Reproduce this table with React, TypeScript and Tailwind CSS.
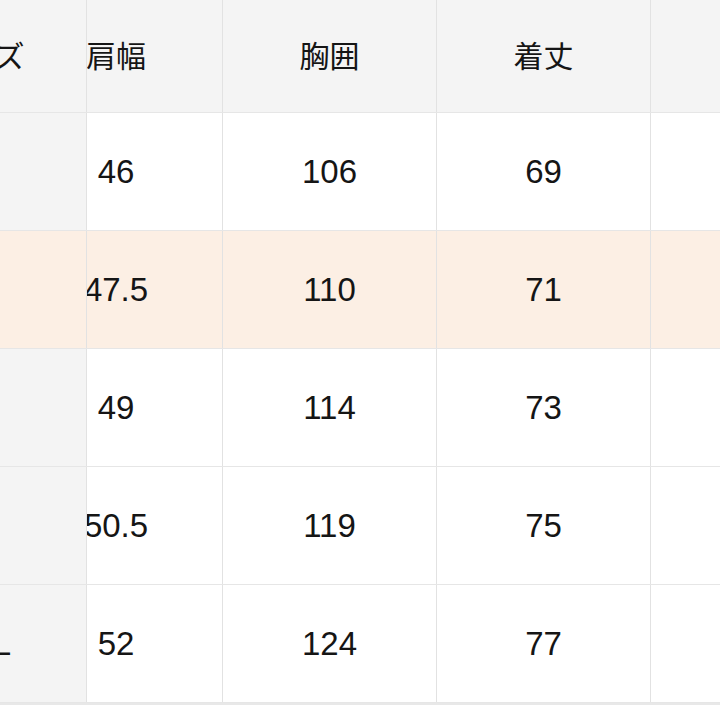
const headers = ["肩幅", "胸囲", "着丈", "袖丈"]

const rows = [
  { size: "S", values: ["46", "106", "69", "21"] },
  { size: "M", values: ["47.5", "110", "71", "22"], highlighted: true },
  { size: "L", values: ["49", "114", "73", "23"] },
  { size: "XL", values: ["50.5", "119", "75", "24"] },
  { size: "XXL", values: ["52", "124", "77", "25"] },
]

const font = { fontFamily: '"Liberation Sans", "Noto Sans CJK JP", sans-serif' }

function Cell({
  children,
  className,
  clip,
}: {
  children: React.ReactNode
  className: string
  clip?: boolean
}) {
  if (clip) {
    return (
      <div className={`flex justify-end overflow-hidden border-r border-[#e2e2e2] ${className}`}>
        <div className="flex w-[212px] shrink-0 items-center justify-center">{children}</div>
      </div>
    )
  }
  return (
    <div className={`flex w-[214px] shrink-0 items-center justify-center border-r border-[#e2e2e2] ${className}`}>
      {children}
    </div>
  )
}

export default function App() {
  return (
    <div className="h-[720px] w-[720px] overflow-hidden bg-white text-[#151515]" style={font}>
      {/* Header */}
      <div className="flex h-[113px] border-b border-[#e6e6e6] bg-[#f4f4f4] text-[30px]">
        <Cell clip className="w-[87px] shrink-0">
          サイズ
        </Cell>
        <Cell clip className="w-[136px] shrink-0">
          {headers[0]}
        </Cell>
        {headers.slice(1).map((h) => (
          <Cell key={h} className="">
            {h}
          </Cell>
        ))}
      </div>

      {/* Rows */}
      {rows.map((row) => (
        <div
          key={row.size}
          className={`flex h-[118px] border-b border-[#e6e6e6] text-[33px] ${
            row.highlighted ? "bg-[#fcefe4]" : "bg-white"
          }`}
        >
          <Cell clip className={`w-[87px] shrink-0 ${row.highlighted ? "bg-[#fcefe4]" : "bg-[#f4f4f4]"}`}>
            {row.size}
          </Cell>
          <Cell clip className="w-[136px] shrink-0">
            {row.values[0]}
          </Cell>
          {row.values.slice(1).map((v, i) => (
            <Cell key={i} className="">
              {v}
            </Cell>
          ))}
        </div>
      ))}
      <div className="h-[2px] bg-[#e8e8e8]" />
    </div>
  )
}
